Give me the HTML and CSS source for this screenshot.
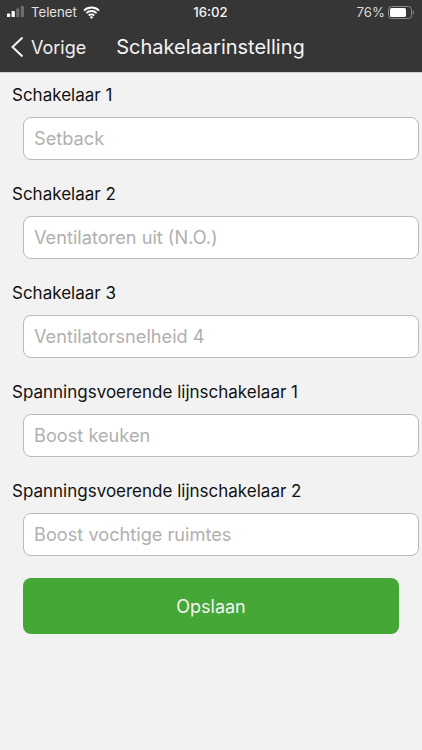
FILE: index.html
```html
<!DOCTYPE html>
<html lang="nl">
<head>
<meta charset="utf-8">
<title>Schakelaarinstelling</title>
<link rel="stylesheet" href="styles.css">
</head>
<body>
<header class="top">
  <div class="status">
    <div class="status-left">
      <svg class="signal" width="20" height="12" viewBox="0 0 20 12"><rect x="0" y="7.500" width="3.200" height="3.500" rx=".6" fill="#fff"/><rect x="4.600" y="5" width="3.200" height="6" rx=".6" fill="#fff"/><rect x="9.200" y="2.500" width="3.200" height="8.500" rx=".6" fill="#6e6e6e"/><rect x="13.800" y="0" width="3.200" height="11" rx=".6" fill="#6e6e6e"/></svg>
      <span class="carrier">Telenet</span>
      <svg class="wifi" width="17" height="13" viewBox="0 0 17 13"><path d="M1 4.600a10.800 10.800 0 0 1 15 0M3.400 7.100a7.300 7.300 0 0 1 10.200 0M5.800 9.500a3.900 3.900 0 0 1 5.400 0" fill="none" stroke="#fff" stroke-width="1.900"/><path d="M8.500 13 6.700 11a2.600 2.600 0 0 1 3.600 0z" fill="#fff"/></svg>
    </div>
    <div class="clock">16:02</div>
    <div class="status-right">
      <span class="pct">76%</span>
      <svg width="26" height="13" viewBox="0 0 26 13"><rect x=".5" y=".5" width="23" height="12" rx="3" fill="none" stroke="#8a8a8a"/><rect x="2" y="2" width="16" height="9" rx="1.600" fill="#fff"/><path d="M24.800 4.500c.8.300 1.100 1.100 1.100 2s-.3 1.700-1.100 2z" fill="#8a8a8a"/></svg>
    </div>
  </div>
  <nav class="nav">
    <svg class="back" width="14" height="22" viewBox="0 0 14 22"><path d="M12.500 1.500 2.500 11l10 9.500" fill="none" stroke="#f4f4f4" stroke-width="2"/></svg>
    <span class="back-label">Vorige</span>
    <h1 class="title">Schakelaarinstelling</h1>
  </nav>
</header>
<main class="form">
  <section class="field">
    <div class="label">Schakelaar 1</div>
    <div class="input">Setback</div>
  </section>
  <section class="field">
    <div class="label">Schakelaar 2</div>
    <div class="input">Ventilatoren uit (N.O.)</div>
  </section>
  <section class="field">
    <div class="label">Schakelaar 3</div>
    <div class="input">Ventilatorsnelheid 4</div>
  </section>
  <section class="field">
    <div class="label">Spanningsvoerende lijnschakelaar 1</div>
    <div class="input">Boost keuken</div>
  </section>
  <section class="field">
    <div class="label">Spanningsvoerende lijnschakelaar 2</div>
    <div class="input">Boost vochtige ruimtes</div>
  </section>
  <button class="save" type="button">Opslaan</button>
</main>
</body>
</html>
```
FILE: styles.css
```css
* { box-sizing: border-box; }
html, body { margin: 0; padding: 0; }
body {
  width: 422px;
  height: 750px;
  overflow: hidden;
  background: #f2f2f2;
  font-family: Inter, "Liberation Sans", sans-serif;
}
.top { background: #363636; height: 73px; color: #fff; border-bottom: 1px solid #d0d0d0; }
.status {
  height: 24px;
  display: grid;
  grid-template-columns: 1fr auto 1fr;
  align-items: center;
  padding: 0 8px 0 7px;
  font-size: 13.2px;
}
.status-left { display: flex; align-items: center; }
.signal { margin-right: 4px; }
.carrier { color: #e2e2e2; margin-right: 6px; }
.clock { font-weight: 500; color: #f4f4f4; }
.status-right { display: flex; justify-content: flex-end; align-items: center; gap: 3px; color: #d8d8d8; }
.nav { display: flex; align-items: center; height: 46px; padding: 0 0 0 10px; }
.back { margin-right: 7px; }
.back-label { font-size: 18px; color: #f0f0f0; margin-right: 30px; }
.title { margin: 0; font-size: 20px; font-weight: 400; color: #f4f4f4; }
.form { display: flex; flex-direction: column; padding: 11px 3px 0 12px; }
.field { height: 99px; }
.label { font-size: 17px; line-height: 22px; color: #111; margin-bottom: 11px; }
.input {
  margin-left: 11px;
  height: 43px;
  background: #fff;
  border: 1.500px solid #bababa;
  border-radius: 8px;
  padding: 0 10px;
  font-size: 18.2px;
  line-height: 40px;
  color: #b0b0b0;
}
.save {
  margin: -1px 20px 0 11px;
  height: 56px;
  background: #45a735;
  color: #f4f4f4;
  border: 0;
  border-radius: 8px;
  font: inherit;
  font-size: 18px;
}
```
